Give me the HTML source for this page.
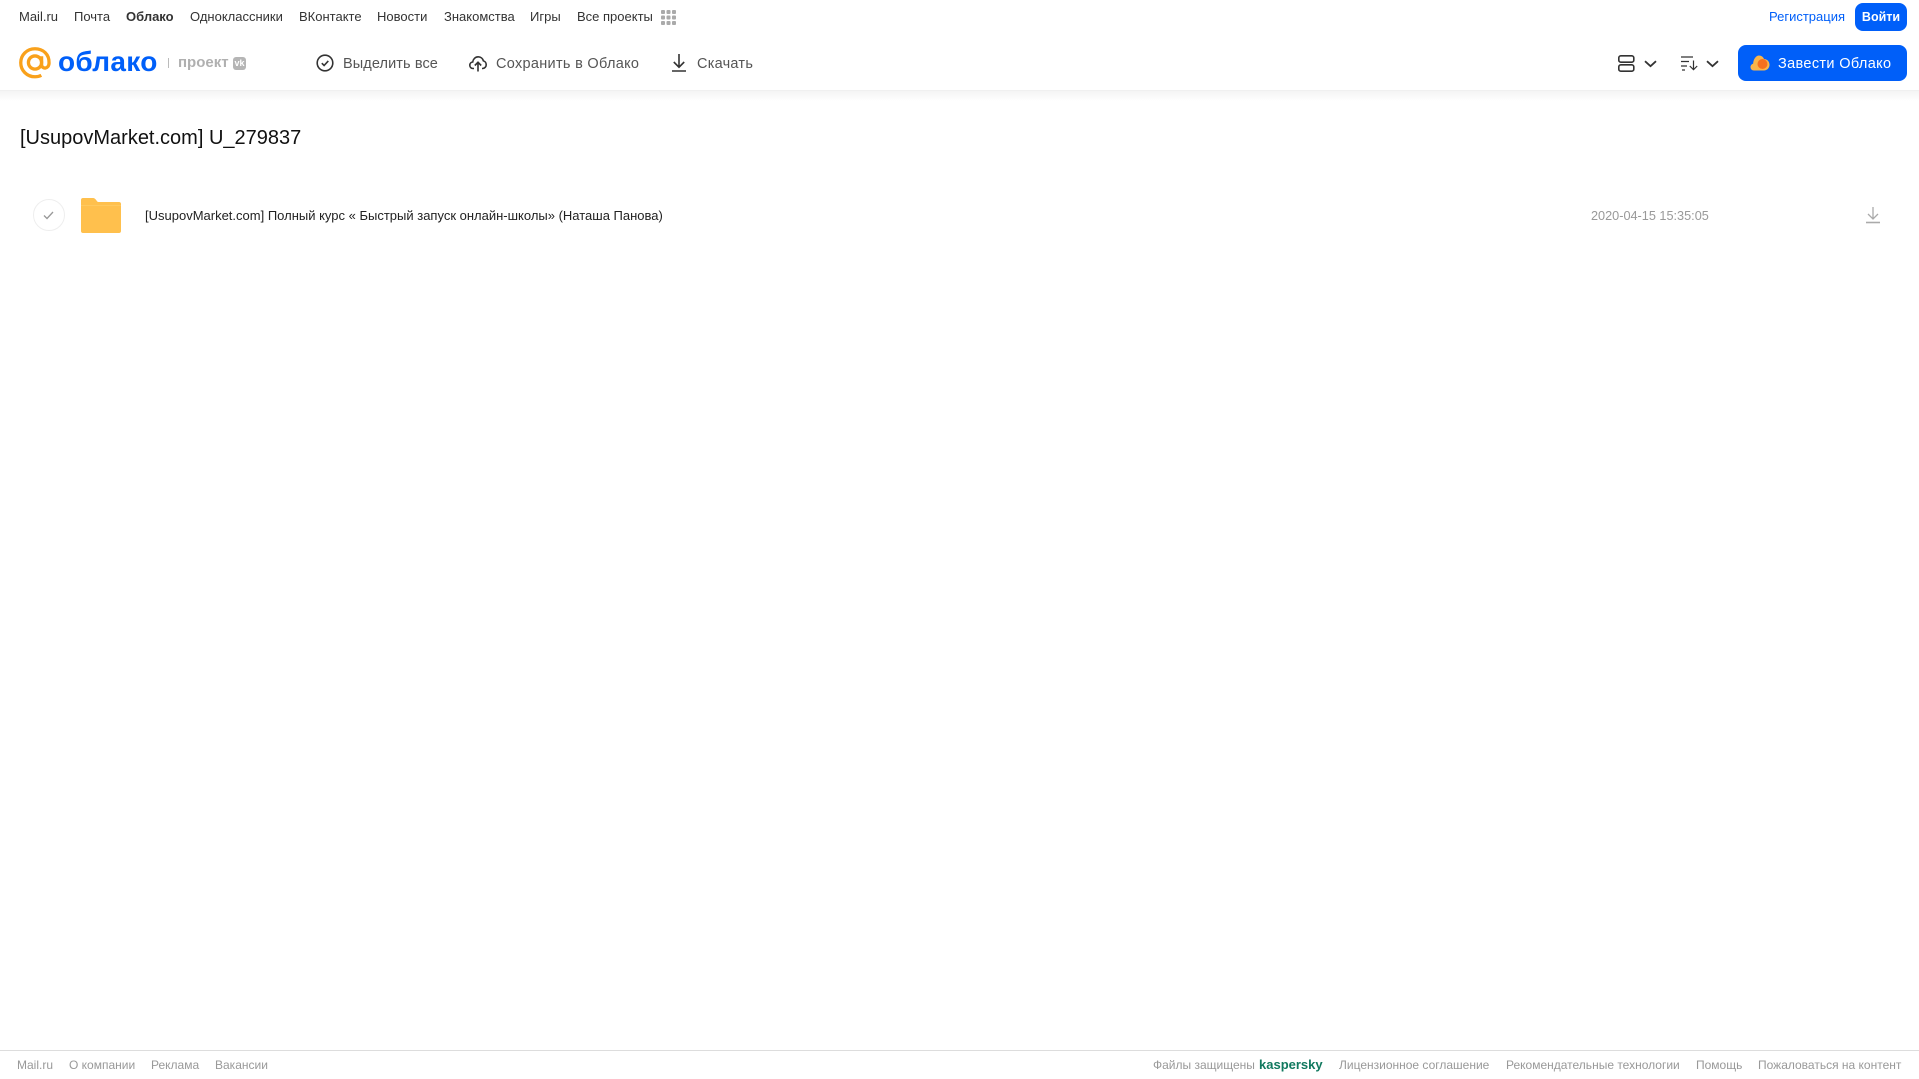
<!DOCTYPE html>
<html lang="ru"><head><meta charset="utf-8"><title>Облако</title>
<style>
html,body{margin:0;padding:0;background:#fff}
body{position:relative;width:1919px;height:1079px;overflow:hidden;font-family:"Liberation Sans",Arial,sans-serif;color:#333}
.t{position:absolute;white-space:nowrap;line-height:16px;font-size:12px}
.n{top:9px;color:#333;font-size:13px}
.b{top:54px;font-size:14.5px;color:#555;line-height:18px;letter-spacing:.1px;padding-top:1px}
.f{top:1057px;color:#999}
svg{position:absolute;overflow:visible}
</style></head><body>
<div style="position:absolute;left:0;top:91px;width:1919px;height:10px;background:linear-gradient(#f4f4f4,#fff)"></div>
<div style="position:absolute;left:0;top:90px;width:1919px;height:1px;background:#f0f0f0"></div>

<span class="t n" style="left:19px">Mail.ru</span>
<span class="t n" style="left:74px">Почта</span>
<span class="t n" style="left:126px;font-weight:bold">Облако</span>
<span class="t n" style="left:190px">Одноклассники</span>
<span class="t n" style="left:299px">ВКонтакте</span>
<span class="t n" style="left:377px">Новости</span>
<span class="t n" style="left:444px">Знакомства</span>
<span class="t n" style="left:530px">Игры</span>
<span class="t n" style="left:577px">Все проекты</span>
<svg style="left:661px;top:10px" width="15" height="15" fill="#aaa"><rect width="4" height="4" rx="1"/><rect x="5.500" width="4" height="4" rx="1"/><rect x="11" width="4" height="4" rx="1"/><rect y="5.500" width="4" height="4" rx="1"/><rect x="5.500" y="5.500" width="4" height="4" rx="1"/><rect x="11" y="5.500" width="4" height="4" rx="1"/><rect y="11" width="4" height="4" rx="1"/><rect x="5.500" y="11" width="4" height="4" rx="1"/><rect x="11" y="11" width="4" height="4" rx="1"/></svg>

<span class="t" style="left:1769px;top:9px;font-size:13px;color:#005ff9">Регистрация</span>
<div style="position:absolute;left:1855px;top:3px;width:52px;height:28px;border-radius:8px;background:#005ff9;color:#fff;font-size:12.500px;font-weight:bold;line-height:28px;text-align:center">Войти</div>

<svg style="left:19px;top:47px" width="32" height="32" viewBox="0 0 33 33" fill="none" stroke="#f9a11b" stroke-width="3.400"><circle cx="16.500" cy="16" r="6.800"/><path d="M23.300 9.500v8.500c0 5.200 7.400 5.200 7.700-1.500C31.300 7.500 24.700 1.800 16.500 1.800 8.200 1.800 1.800 8.200 1.800 16.200s6.400 14.500 14.700 14.500c2.800 0 4.800-.6 6.500-1.500"/></svg>
<span class="t" style="left:58px;top:44px;font-size:28px;line-height:36px;font-weight:bold;color:#005ff9;letter-spacing:.3px">облако</span>
<div style="position:absolute;left:168px;top:58px;width:1px;height:10px;background:#bbb"></div>
<span class="t" style="left:178px;top:54px;font-size:15px;line-height:17px;font-weight:bold;color:#b0b0b0">проект</span>
<div style="position:absolute;left:233px;top:57px;width:13px;height:13px;border-radius:3px;background:#b5b5b5;color:#fff;font-size:9px;line-height:12px;font-weight:bold;text-align:center">vk</div>

<svg style="left:316px;top:54px" width="18" height="18" viewBox="0 0 18 18" fill="none" stroke="#333" stroke-width="1.600"><circle cx="9" cy="9" r="7.800"/><path d="M5.800 9.200l2.300 2.300 4.200-4.600"/></svg>
<span class="t b" style="left:343px">Выделить все</span>
<svg style="left:469px;top:54px" width="18" height="18" viewBox="0 0 18 18" fill="none" stroke="#333" stroke-width="1.600"><path d="M5 14.500H4C1.800 14.500.8 12.800.8 11.300c0-1.800 1.200-3.100 2.900-3.300C4.100 5 6.300 2.800 9.200 2.800c2.600 0 4.600 1.800 5.200 4.100 1.600.4 2.800 2 2.800 3.800 0 2-1.400 3.800-3.700 3.800H13"/><path d="M9 17.500V8.500M5.800 11.500L9 8.300l3.200 3.200"/></svg>
<span class="t b" style="left:496px;letter-spacing:.3px">Сохранить в Облако</span>
<svg style="left:672px;top:54px" width="14" height="18" viewBox="0 0 14 18" fill="none" stroke="#333" stroke-width="1.600"><path d="M7 0v13M1.800 8L7 13.200 12.200 8M0 17h14"/></svg>
<span class="t b" style="left:697px;letter-spacing:.25px">Скачать</span>

<svg style="left:1618px;top:55px" width="17" height="17" viewBox="0 0 17 17" fill="none" stroke="#333" stroke-width="1.600"><rect x=".8" y=".8" width="15" height="6.400" rx="2"/><rect x=".8" y="9.800" width="15" height="6.400" rx="2"/></svg>
<svg style="left:1644px;top:60px" width="13" height="8" fill="none" stroke="#333" stroke-width="1.800"><path d="M1 1.200l5.500 5 5.500-5"/></svg>
<svg style="left:1681px;top:56px" width="17" height="15" fill="none" stroke="#333" stroke-width="1.200"><path d="M0 1h12M0 5.500h8M0 10h6M1 14h3M12.500 4.500V13.500M8.800 10l3.700 3.700 3.700-3.700"/></svg>
<svg style="left:1706px;top:60px" width="13" height="8" fill="none" stroke="#333" stroke-width="1.800"><path d="M1 1.200l5.500 5 5.500-5"/></svg>

<div style="position:absolute;left:1738px;top:45px;width:169px;height:36px;border-radius:8px;background:#005ff9"></div>
<svg style="left:1750px;top:54px" width="20" height="18" viewBox="0 0 20 18"><path d="M4 16.500C1.800 16.500.5 14.900.5 13c0-1.700 1.200-3 2.600-3.300C3.500 5 6 1.500 9 1.500c2.400 0 4.300 1.600 5 3.500 3 0 5.500 2.500 5.500 5.800s-2.500 5.700-5.500 5.700z" fill="#f9b54a"/><circle cx="12.500" cy="10" r="5" fill="#f5701f"/></svg>
<span class="t b" style="left:1778px;color:#fff;letter-spacing:.35px">Завести Облако</span>

<span class="t" style="left:20px;top:126px;font-size:20px;line-height:24px;color:#111">[UsupovMarket.com] U_279837</span>

<div style="position:absolute;left:33px;top:199px;width:30px;height:30px;border:1px solid #eee;border-radius:50%"></div>
<svg style="left:43px;top:211px" width="11" height="9" fill="none" stroke="#999" stroke-width="1.300"><path d="M1 4.500l3 3 6-6.500"/></svg>
<svg style="left:81px;top:198px" width="40" height="35" viewBox="0 0 40 35"><path d="M2 0h10c1.500 0 2.500 1 3.500 2.500S17 4 18 4h20c1.200 0 2 .8 2 2v27c0 1.200-.8 2-2 2H2c-1.200 0-2-.8-2-2V2C0 .8.800 0 2 0z" fill="#ffc04d"/><path d="M0 7h40v1H0z" fill="#ffc95f"/></svg>
<span class="t" style="left:145px;top:208px;font-size:13px;color:#222">[UsupovMarket.com] Полный курс « Быстрый запуск онлайн-школы» (Наташа Панова)</span>
<span class="t" style="left:1591px;top:208px;font-size:12.700px;color:#999">2020-04-15 15:35:05</span>
<svg style="left:1866px;top:206px" width="14" height="18" viewBox="0 0 14 18" fill="none" stroke="#aaa" stroke-width="1.300"><path d="M7 1v12M2 8l5 5 5-5"/><path d="M0 16.500h14" stroke-width="1.600"/></svg>

<div style="position:absolute;left:0;top:1050px;width:1919px;height:1px;background:#ddd"></div>
<span class="t f" style="left:17px">Mail.ru</span>
<span class="t f" style="left:69px">О компании</span>
<span class="t f" style="left:151px">Реклама</span>
<span class="t f" style="left:215px">Вакансии</span>
<span class="t f" style="left:1153px">Файлы защищены</span>
<span class="t f" style="left:1259px;font-size:13px;font-weight:bold;color:#11795f">kaspersky</span>
<span class="t f" style="left:1339px">Лицензионное соглашение</span>
<span class="t f" style="left:1506px">Рекомендательные технологии</span>
<span class="t f" style="left:1696px">Помощь</span>
<span class="t f" style="left:1758px">Пожаловаться на контент</span>
</body></html>
